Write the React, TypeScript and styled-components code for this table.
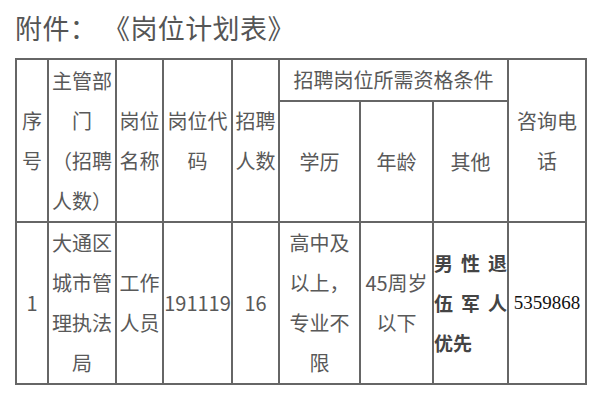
import React from "react";
import styled, { createGlobalStyle } from "styled-components";

const GlobalStyle = createGlobalStyle`
  html, body {
    margin: 0;
    padding: 0;
    background: #ffffff;
  }
  body {
    font-family: "Noto Sans CJK SC", "Noto Sans", sans-serif;
    color: #555555;
    text-spacing-trim: space-all;
  }
`;

const Page = styled.div`
  width: 600px;
  height: 403px;
  padding: 0 0 0 15px;
  box-sizing: border-box;
  overflow: hidden;
`;

const Title = styled.h1`
  margin: 0;
  height: 58px;
  font-size: 27px;
  font-weight: 400;
  line-height: 56px;
  letter-spacing: 0.4px;
  color: #555555;
  text-spacing-trim: space-all;
`;

const Table = styled.table`
  table-layout: fixed;
  border-collapse: collapse;
  width: 570px;
  font-size: 20px;
  line-height: 40px;
  color: #595959;
`;

const Cell = styled.td<{ $h?: number }>`
  border: 2px solid #666666;
  padding: 0;
  text-align: center;
  vertical-align: middle;
  height: ${(p) => (p.$h ? `${p.$h}px` : "auto")};
  text-spacing-trim: space-all;
`;

const Bold = styled(Cell)`
  font-weight: 700;
  font-size: 19px;
  color: #444444;
  text-align: justify;
  text-align-last: left;
  text-justify: inter-character;
`;

const Phone = styled(Cell)`
  font-family: "Liberation Serif", serif;
  color: #111111;
  font-size: 19px;
`;

const widths = [32, 68, 47, 69, 47, 81, 73, 75, 78];

export default function App() {
  return (
    <Page>
      <GlobalStyle />
      <Title>附件：{"\u2009"}《岗位计划表》</Title>
      <Table>
        <colgroup>
          {widths.map((w, i) => (
            <col key={i} style={{ width: w }} />
          ))}
        </colgroup>
        <tbody>
          <tr>
            <Cell rowSpan={2}>序号</Cell>
            <Cell rowSpan={2}>
              主管部门
              <br />
              （招聘人数）
            </Cell>
            <Cell rowSpan={2}>岗位名称</Cell>
            <Cell rowSpan={2}>岗位代码</Cell>
            <Cell rowSpan={2}>招聘人数</Cell>
            <Cell colSpan={3} $h={40}>招聘岗位所需资格条件</Cell>
            <Cell rowSpan={2}>咨询电话</Cell>
          </tr>
          <tr>
            <Cell $h={119}>学历</Cell>
            <Cell>年龄</Cell>
            <Cell>其他</Cell>
          </tr>
          <tr>
            <Cell $h={160}>1</Cell>
            <Cell>大通区城市管理执法局</Cell>
            <Cell>工作人员</Cell>
            <Cell>191119</Cell>
            <Cell>16</Cell>
            <Cell>高中及以上，专业不限</Cell>
            <Cell>45周岁以下</Cell>
            <Bold>男性退伍军人优先</Bold>
            <Phone>5359868</Phone>
          </tr>
        </tbody>
      </Table>
    </Page>
  );
}
